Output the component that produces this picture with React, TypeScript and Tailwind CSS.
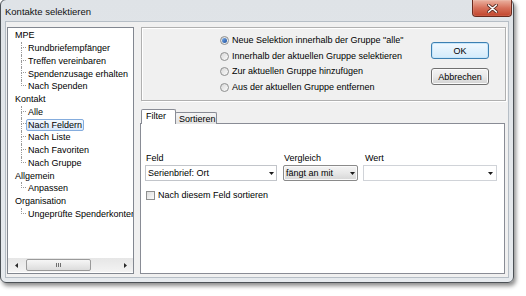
import React from "react";

const tree = [
  { label: "MPE", children: ["Rundbriefempfänger", "Treffen vereinbaren", "Spendenzusage erhalten", "Nach Spenden"] },
  { label: "Kontakt", children: ["Alle", "Nach Feldern", "Nach Liste", "Nach Favoriten", "Nach Gruppe"] },
  { label: "Allgemein", children: ["Anpassen"] },
  { label: "Organisation", children: ["Ungeprüfte Spenderkonten"] },
];

const radios = [
  'Neue Selektion innerhalb der Gruppe "alle"',
  "Innerhalb der aktuellen Gruppe selektieren",
  "Zur aktuellen Gruppe hinzufügen",
  "Aus der aktuellen Gruppe entfernen",
];

function DownArrow() {
  return (
    <svg width="5" height="3" viewBox="0 0 5 3" className="shrink-0">
      <path d="M0 0h5L2.5 3z" fill="#1a1a1a" />
    </svg>
  );
}

function TreeView() {
  return (
    <div className="w-[127px] flex flex-col border border-[#828790] bg-white">
      <div className="flex-1 overflow-hidden whitespace-nowrap pt-[1px]">
        {tree.map((g) => (
          <div key={g.label}>
            <div className="h-[12.75px] flex items-center pl-[7px] leading-[10px]">{g.label}</div>
            <div className="ml-[13px]">
              {g.children.map((c, i) => {
                const last = i === g.children.length - 1;
                const sel = c === "Nach Feldern";
                return (
                  <div key={c} className="h-[12.75px] flex items-stretch">
                    <div className="w-[5px] shrink-0 flex flex-col">
                      <div className="h-[6px] border-l border-b border-dotted border-[#9a9a9a]" />
                      <div className={last ? "flex-1" : "flex-1 border-l border-dotted border-[#9a9a9a]"} />
                    </div>
                    <div className="flex items-center">
                      <span
                        className={
                          sel
                            ? "leading-[10px] px-[1px] border border-[#84acdd] rounded-[2px] bg-gradient-to-b from-[#f4f9fe] to-[#d9e8fb]"
                            : "leading-[10px] px-[1px] border border-transparent"
                        }
                      >
                        {c}
                      </span>
                    </div>
                  </div>
                );
              })}
            </div>
          </div>
        ))}
      </div>
      <div className="h-[14px] flex items-stretch bg-gradient-to-b from-[#e6e6e6] to-[#f3f3f3] mb-[1px]">
        <div className="w-[16px] flex items-center justify-center">
          <svg width="3" height="5" viewBox="0 0 3 5">
            <path d="M3 0v5L0 2.5z" fill="#2a2a2a" />
          </svg>
        </div>
        <div className="w-[65px] ml-[2px] my-[1px] rounded-[2px] border border-[#9a9a9a] bg-gradient-to-b from-[#f6f6f6] to-[#dcdcdc] flex items-center justify-center gap-[1px]">
          <span className="w-[1px] h-[4px] bg-[#6f6f6f]" />
          <span className="w-[1px] h-[4px] bg-[#6f6f6f]" />
          <span className="w-[1px] h-[4px] bg-[#6f6f6f]" />
        </div>
        <div className="flex-1" />
        <div className="w-[16px] flex items-center justify-center">
          <svg width="3" height="5" viewBox="0 0 3 5">
            <path d="M0 0v5L3 2.5z" fill="#2a2a2a" />
          </svg>
        </div>
      </div>
    </div>
  );
}

function Radio({ checked, label }: { checked: boolean; label: string }) {
  return (
    <div className="h-[15.5px] flex items-center">
      <span className="w-[9px] h-[9px] rounded-full border border-[#8e8f8f] bg-gradient-to-br from-[#d8d8d8] to-[#fbfbfb] flex items-center justify-center shrink-0">
        {checked && <span className="w-[5px] h-[5px] rounded-full bg-gradient-to-br from-[#7fb0ec] to-[#1a4d9c]" />}
      </span>
      <span className="ml-[3px] leading-[11px]">{label}</span>
    </div>
  );
}

export default function App() {
  return (
    <div className="relative w-[526px] h-[296px] bg-white overflow-hidden font-['Liberation_Sans',Arial,sans-serif] text-[9px] text-black">
      {/* window */}
      <div className="absolute left-0 top-[-1px] w-[514px] h-[284px] flex flex-col border border-[#4c5156] rounded-[6px] bg-gradient-to-b from-[#dfe3e7] to-[#e6eaee] shadow-[2px_3px_4px_rgba(0,0,0,0.45)]">
        {/* title bar */}
        <div className="h-[21px] flex items-start justify-between">
          <div className="pl-[4px] pt-[6px] text-[9.5px] leading-[12px] text-[#111]">Kontakte selektieren</div>
          <div className="mr-[1px] w-[40px] h-[17px] rounded-b-[4px] border border-t-0 border-[#6b2a1d] bg-gradient-to-b from-[#eab1a0] via-[#d6705a] to-[#c1442b] shadow-[inset_0_0_1px_#fff] flex items-center justify-center">
            <svg width="11" height="9" viewBox="0 0 11 9">
              <path d="M1.5 1l8 7M9.5 1l-8 7" stroke="#5a2a20" strokeWidth="3.2" strokeLinecap="round" />
              <path d="M1.5 1l8 7M9.5 1l-8 7" stroke="#ffffff" strokeWidth="1.6" strokeLinecap="round" />
            </svg>
          </div>
        </div>
        {/* client */}
        <div className="flex-1 mx-[4px] mb-[4px] border border-[#b6bec6] bg-[#f0f0f0] flex pt-[5px] pl-[1px] pr-[2px] pb-[3px]">
          <TreeView />
          <div className="ml-[6px] flex-1 flex flex-col">
            {/* top panel */}
            <div className="ml-[1px] h-[74px] border border-[#b0b0b0] shadow-[inset_1px_1px_0_#ffffff,1px_1px_0_#ffffff] flex">
              <div className="ml-[78px] pt-[5px] flex flex-col">
                {radios.map((r, i) => (
                  <Radio key={r} checked={i === 0} label={r} />
                ))}
              </div>
              <div className="flex-1" />
              <div className="mr-[16px] pt-[14px] flex flex-col gap-[9px]">
                <div className="w-[58px] h-[17px] rounded-[3px] border border-[#3c7fb1] bg-gradient-to-b from-[#f1f8fe] to-[#d3ebfb] shadow-[inset_0_0_0_1px_#c6e6fb] flex items-center justify-center leading-[10px]">
                  OK
                </div>
                <div className="w-[58px] h-[17px] rounded-[3px] border border-[#707070] bg-gradient-to-b from-[#f3f3f3] via-[#e9e9e9] to-[#d2d2d2] shadow-[inset_0_0_0_1px_#fbfbfb] flex items-center justify-center leading-[10px]">
                  Abbrechen
                </div>
              </div>
            </div>
            {/* tabs */}
            <div className="mt-[9px] h-[14px] flex items-end pl-[1px] relative z-10 -mb-[1px]">
              <div className="relative z-10 w-[35px] h-[15px] bg-white border border-b-0 border-[#898c95] rounded-t-[2px] pl-[4px] pt-[1px] leading-[11px]">
                Filter
              </div>
              <div className="-ml-[1px] w-[42px] h-[12px] bg-gradient-to-b from-[#f4f4f4] to-[#e2e2e2] border border-b-0 border-[#898c95] rounded-t-[2px] pl-[3px] pt-[1px] leading-[10px]">
                Sortieren
              </div>
            </div>
            <div className="flex-1 mr-[1px] border border-[#898c95] bg-white pl-[4px] pt-[29px]">
              <div className="flex">
                <div className="w-[132px]">
                  <div className="pl-[1px] leading-[11px] h-[12px]">Feld</div>
                  <div className="h-[16px] border border-[#c2c5ca] flex items-center justify-between pl-[2px] pr-[2px]">
                    <span className="leading-[10px]">Serienbrief: Ort</span>
                    <DownArrow />
                  </div>
                </div>
                <div className="ml-[6px] w-[75px]">
                  <div className="pl-[1px] leading-[11px] h-[12px]">Vergleich</div>
                  <div className="h-[16px] rounded-[2px] border border-[#8a8a8a] bg-gradient-to-b from-[#f4f4f4] via-[#e8e8e8] to-[#d6d6d6] shadow-[inset_0_0_0_1px_#fafafa] flex items-center justify-between pl-[2px] pr-[2px]">
                    <span className="leading-[10px]">fängt an mit</span>
                    <DownArrow />
                  </div>
                </div>
                <div className="ml-[5px] w-[134px]">
                  <div className="pl-[2px] leading-[11px] h-[12px]">Wert</div>
                  <div className="h-[16px] border border-[#d0d3d8] flex items-center justify-end pr-[3px]">
                    <DownArrow />
                  </div>
                </div>
              </div>
              <div className="mt-[9px] flex items-center h-[10px]">
                <span className="ml-[1px] w-[9px] h-[9px] border border-[#8e8f8f] bg-gradient-to-br from-[#dcdcdc] to-[#fbfbfb] shrink-0" />
                <span className="ml-[3px] leading-[10px]">Nach diesem Feld sortieren</span>
              </div>
            </div>
          </div>
        </div>
      </div>
    </div>
  );
}
